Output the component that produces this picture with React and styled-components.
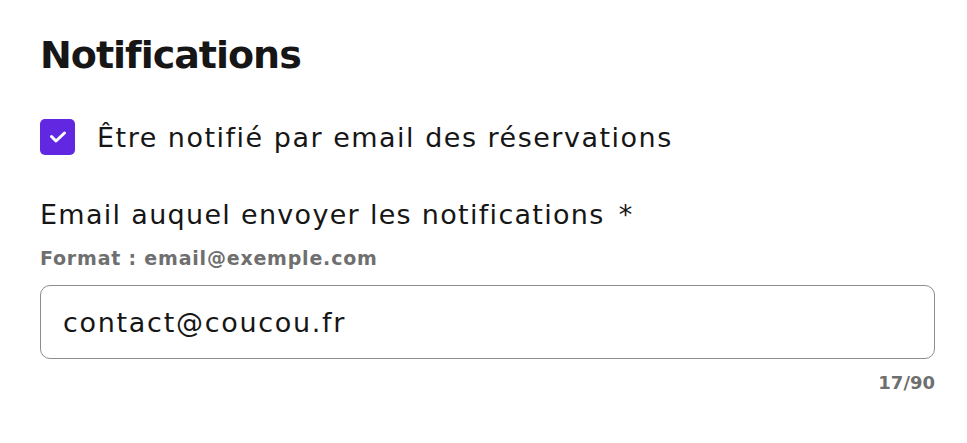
import React from 'react'
import styled, { createGlobalStyle } from 'styled-components'

const Global = createGlobalStyle`
body {
  margin: 0;
  background: #ffffff;
  font-family: "DejaVu Sans", "Open Sans", sans-serif;
  color: #161616;
}
`
const Wrapper = styled.div`
padding: 29px 32px 0 40px;
display: flex;
flex-direction: column;
`
const Title = styled.h2`
margin: 0;
font-size: 38px;
letter-spacing: -1px;
font-weight: 700;
line-height: 52px;
`
const CheckRow = styled.label`
display: flex;
align-items: center;
gap: 22px;
margin-top: 38px;
font-size: 27px;
letter-spacing: 1.5px;
font-weight: 400;
`
const Box = styled.span`
width: 35px;
height: 36px;
border-radius: 5px;
background: #6228e1;
display: flex;
align-items: center;
justify-content: center;
flex-shrink: 0;
`
const Label = styled.div`
margin-top: 44px;
font-size: 27px;
letter-spacing: 1.3px;
font-weight: 400;
line-height: 32px;
span{
  margin-left: 14px;
}
`
const Hint = styled.div`
margin-top: 16px;
font-size: 19px;
letter-spacing: 0.8px;
font-weight: 700;
color: #6f6f6f;
`
const Input = styled.div`
margin-top: 16px;
height: 72px;
border: 1px solid #8c8c8c;
border-radius: 10px;
display: flex;
align-items: center;
padding: 0 22px;
font-size: 27px;
letter-spacing: 1.7px;
`
const Counter = styled.div`
margin-top: 13px;
text-align: right;
font-size: 18px;
font-weight: 700;
color: #6f6f6f;
`

export default function App() {
  return (
    <>
      <Global />
      <Wrapper>
        <Title>Notifications</Title>
        <CheckRow>
          <Box>
            <svg width="20" height="16" viewBox="0 0 20 16" fill="none">
              <path d="M3.5 7.5l4.5 4.5L16.5 4" stroke="#fff" strokeWidth="3" strokeLinecap="round" strokeLinejoin="round" />
            </svg>
          </Box>
          Être notifié par email des réservations
        </CheckRow>
        <Label>Email auquel envoyer les notifications<span>*</span></Label>
        <Hint>Format : email@exemple.com</Hint>
        <Input>contact@coucou.fr</Input>
        <Counter>17/90</Counter>
      </Wrapper>
    </>
  )
}
